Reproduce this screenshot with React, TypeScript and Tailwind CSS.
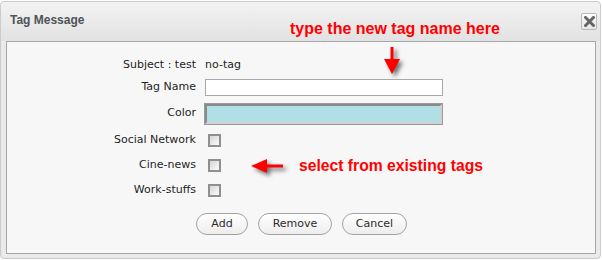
import type { ReactNode } from "react";

const labelFont = { fontFamily: '"DejaVu Sans", Verdana, sans-serif' };

function Checkbox() {
  return (
    <span className="ml-[3px] block h-[13px] w-[13px] border-2 border-[#8f8f8f] bg-gradient-to-br from-[#d6d6d6] to-[#fbfbfb]" />
  );
}

function FormRow({
  label,
  className,
  children,
}: {
  label: string;
  className: string;
  children: ReactNode;
}) {
  return (
    <div className={`flex items-center ${className}`}>
      <span className="w-[190px] shrink-0 pr-[1px] text-right">{label}</span>
      <div className="ml-[8px] flex flex-1 items-center">{children}</div>
    </div>
  );
}

function PillButton({ label, width }: { label: string; width: string }) {
  return (
    <button
      className={`${width} h-[22px] rounded-full border border-[#a3a3a3] bg-gradient-to-b from-[#ffffff] to-[#ededed] text-[11px] text-[#2b2b2b]`}
      style={labelFont}
      type="button"
    >
      {label}
    </button>
  );
}

function DownArrow() {
  return (
    <svg
      className="absolute left-[383px] top-[46px] drop-shadow-[3px_3px_2px_rgba(0,0,0,0.55)]"
      height="28"
      viewBox="0 0 18 28"
      width="18"
    >
      <rect fill="#ff0000" height="14" width="3" x="7.5" y="0" />
      <polygon fill="#ff0000" points="1,12 17,12 9,27" />
    </svg>
  );
}

function LeftArrow() {
  return (
    <svg
      className="absolute left-[250px] top-[157px] drop-shadow-[3px_3px_2px_rgba(0,0,0,0.55)]"
      height="16"
      viewBox="0 0 34 16"
      width="34"
    >
      <polygon fill="#ff0000" points="1,8 17,1 17,15" />
      <rect fill="#ff0000" height="3" width="17" x="16" y="6.5" />
    </svg>
  );
}

export default function App() {
  return (
    <div className="relative h-[260px] w-[602px] bg-white">
      <div className="mt-[1px] flex h-[258px] w-[601px] flex-col rounded-[4px] border border-[#cbcbcb] bg-[#eaeaea]">
        <div className="flex h-[39px] items-start justify-between rounded-t-[4px] bg-gradient-to-b from-[#f3f3f3] to-[#e2e2e2] pl-[9px] pr-[3px]">
          <span
            className="mt-[11px] text-[12px] leading-[14px] font-bold text-[#4f5357]"
            style={{ fontFamily: '"Liberation Sans", Arial, sans-serif' }}
          >
            Tag Message
          </span>
          <button
            className="mt-[11px] flex h-[17px] w-[16px] items-center justify-center rounded-[2px] border border-[#b9b9b9] bg-gradient-to-b from-[#fbfbfb] to-[#e6e6e6]"
            type="button"
          >
            <svg height="11" viewBox="0 0 11 11" width="11">
              <path
                d="M1.5 1.5 L9.5 9.5 M9.5 1.5 L1.5 9.5"
                stroke="#666666"
                strokeLinecap="square"
                strokeWidth="3"
              />
            </svg>
          </button>
        </div>

        <div
          className="mr-[4px] ml-[5px] flex h-[213px] flex-col border border-[#a7a7a7] bg-[#f7f7f7] pt-[13px] text-[11px] text-[#1e1e1e]"
          style={labelFont}
        >
          <FormRow className="h-[20px]" label="Subject : test">
            <span>no-tag</span>
          </FormRow>
          <FormRow className="mt-[2px] h-[20px]" label="Tag Name">
            <input
              className="h-[17px] w-[238px] border border-[#a9a9a9] bg-white px-1 outline-none"
              type="text"
            />
          </FormRow>
          <FormRow className="mt-[6px] h-[21px]" label="Color">
            <div className="h-[20px] w-[237px] border-2 border-t-[#8a8a8a] border-r-[#d0d0d0] border-b-[#d0d0d0] border-l-[#8a8a8a] bg-[#b0dfe5] outline outline-1 outline-[#9a9a9a]" />
          </FormRow>
          <FormRow className="mt-[6px] h-[20px]" label="Social Network">
            <Checkbox />
          </FormRow>
          <FormRow className="mt-[5px] h-[20px]" label="Cine-news">
            <Checkbox />
          </FormRow>
          <FormRow className="mt-[5px] h-[20px]" label="Work-stuffs">
            <Checkbox />
          </FormRow>
          <div className="mt-[13px] flex gap-[10px] pl-[189px]">
            <PillButton label="Add" width="w-[52px]" />
            <PillButton label="Remove" width="w-[74px]" />
            <PillButton label="Cancel" width="w-[65px]" />
          </div>
        </div>
      </div>

      <span
        className="absolute left-[290px] top-[19px] text-[16px] leading-[18px] font-bold text-[#ff0000]"
        style={{ fontFamily: '"Liberation Sans", Arial, sans-serif' }}
      >
        type the new tag name here
      </span>
      <DownArrow />
      <LeftArrow />
      <span
        className="absolute left-[299px] top-[156px] text-[15.7px] leading-[18px] font-bold text-[#ff0000]"
        style={{ fontFamily: '"Liberation Sans", Arial, sans-serif' }}
      >
        select from existing tags
      </span>
    </div>
  );
}
